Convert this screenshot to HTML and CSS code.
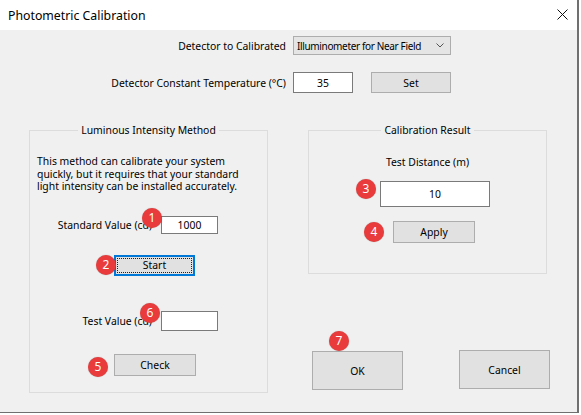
FILE: index.html
```html
<!DOCTYPE html>
<html lang="en">
<head>
  <meta charset="UTF-8" />
  <title>Photometric Calibration</title>
  <link rel="stylesheet" href="styles.css">
</head>
<body>
  <div class="window">
    <div class="titlebar">
      <span class="title">Photometric Calibration</span>
      <svg class="close" width="11" height="11" viewBox="0 0 11 11">
        <path d="M0.5 0.5L10.5 10.5M10.5 0.5L0.5 10.5" stroke="#111" stroke-width="1" fill="none"/>
      </svg>
    </div>

    <div class="content">
      <div class="settings">
        <label class="label">Detector to Calibrated</label>
        <div class="select">
          <span class="select-text">Illuminometer for Near Field</span>
          <svg width="8" height="5" viewBox="0 0 8 5">
            <path d="M0.5 0.5L4 4L7.5 0.5" stroke="#555" stroke-width="1" fill="none"/>
          </svg>
        </div>
        <label class="label">Detector Constant Temperature (°C)</label>
        <div class="inline">
          <input class="input temp" type="text" value="35">
          <button class="btn set">Set</button>
        </div>
      </div>

      <div class="panels">
        <fieldset class="group method">
          <legend>Luminous Intensity Method</legend>
          <p class="note">This method can calibrate your system<br>quickly, but it requires that your standard<br>light intensity can be installed accurately.</p>

          <div class="field first">
            <label>Standard Value (cd)</label>
            <span class="pin">
              <span class="badge b1">1</span>
              <input class="input value std" type="text" value="1000">
            </span>
          </div>
          <span class="pin start-pin">
            <span class="badge b2">2</span>
            <button class="btn start">Start</button>
          </span>

          <div class="field second">
            <label>Test Value (cd)</label>
            <span class="pin">
              <span class="badge b6">6</span>
              <input class="input value test" type="text" value="">
            </span>
          </div>
          <span class="pin check-pin">
            <span class="badge b5">5</span>
            <button class="btn check">Check</button>
          </span>
        </fieldset>

        <div class="side">
          <fieldset class="group result">
            <legend>Calibration Result</legend>
            <p class="caption">Test Distance (m)</p>
            <span class="pin distance-pin">
              <span class="badge b3">3</span>
              <input class="input distance" type="text" value="10">
            </span>
            <span class="pin apply-pin">
              <span class="badge b4">4</span>
              <button class="btn apply">Apply</button>
            </span>
          </fieldset>

          <div class="actions">
            <span class="pin ok-pin">
              <span class="badge b7">7</span>
              <button class="btn big">OK</button>
            </span>
            <button class="btn big">Cancel</button>
          </div>
        </div>
      </div>
    </div>
  </div>
</body>
</html>
```

FILE: styles.css
```css
body, html {
  margin: 0;
  padding: 0;
  background: #fff;
  font-family: 'Noto Sans', 'Liberation Sans', Arial, sans-serif;
  font-size: 10.4px;
  color: #000;
}
.window {
  width: 577px;
  height: 412px;
  background: #f0f0f0;
  border-right: 2px solid #707070;
  border-bottom: 1px solid #707070;
  display: flex;
  flex-direction: column;
}
.titlebar {
  height: 30px;
  flex: none;
  background: #fff;
  display: flex;
  align-items: center;
  justify-content: space-between;
  padding: 0 9px 0 8px;
}
.title {
  font-size: 12.3px;
}
.close {
  margin-top: -1px;
}
.settings {
  display: grid;
  grid-template-columns: 286px max-content;
  column-gap: 7px;
  row-gap: 17px;
  align-items: center;
  padding-top: 6px;
}
.label {
  text-align: right;
}
.select {
  width: 158px;
  height: 19px;
  box-sizing: border-box;
  border: 1px solid #adadad;
  background: #e5e5e5;
  display: flex;
  align-items: center;
  justify-content: space-between;
  padding: 0 6px 0 3px;
}
.select-text {
  white-space: nowrap;
  font-size: 10px;
  letter-spacing: -0.35px;
}
.inline {
  display: flex;
  gap: 18px;
}
.input {
  box-sizing: border-box;
  border: 1px solid #7a7a7a;
  background: #fff;
  font: inherit;
  text-align: center;
  padding: 0;
  margin: 0;
  display: block;
}
.temp {
  width: 60px;
  height: 21px;
}
.btn {
  box-sizing: border-box;
  border: 1px solid #adadad;
  background: #e1e1e1;
  font: inherit;
  color: #000;
  padding: 0;
  margin: 0;
  display: block;
}
.set {
  width: 80px;
  height: 21px;
}
.panels {
  display: flex;
  align-items: flex-start;
  gap: 40px;
  margin-top: 30px;
  padding-left: 29px;
}
.group {
  margin: 0;
  padding: 0;
  width: 239px;
  box-sizing: border-box;
  border: 1px solid #dcdcdc;
  min-width: 0;
}
.group legend {
  margin: 0 auto;
  padding: 0 3px;
  line-height: 14px;
}
.method {
  padding-bottom: 16px;
}
.note {
  margin: 18px 0 0 7px;
  line-height: 12.5px;
  white-space: nowrap;
}
.field {
  display: grid;
  grid-template-columns: 122px 57px;
  column-gap: 9px;
  align-items: center;
}
.field label {
  text-align: right;
}
.field.first {
  margin-top: 23px;
}
.field.second {
  margin-top: 35px;
}
.std {
  width: 57px;
  height: 18px;
}
.test {
  width: 57px;
  height: 20px;
}
.pin {
  position: relative;
  display: block;
}
.start-pin {
  margin: 21px 0 0 84px;
  width: 81px;
}
.start {
  width: 81px;
  height: 21px;
  border: 2px solid #0078d7;
  outline: 1px dotted #222;
  outline-offset: -4px;
}
.check-pin {
  margin: 23px 0 0 84px;
  width: 82px;
}
.check {
  width: 82px;
  height: 22px;
}
.result {
  padding-bottom: 30px;
}
.caption {
  margin: 18px 0 0;
  line-height: 14px;
  text-align: center;
}
.distance-pin {
  margin: 12px 0 0 71px;
  width: 110px;
}
.distance {
  width: 110px;
  height: 26px;
}
.apply-pin {
  margin: 14px 0 0 84px;
  width: 82px;
}
.apply {
  width: 82px;
  height: 22px;
}
.actions {
  display: flex;
  align-items: flex-start;
  gap: 56px;
  margin: 76px 0 0 4px;
}
.ok-pin {
  margin-top: 1px;
}
.big {
  width: 91px;
  height: 39px;
}

/* numbered markers over the controls */
.badge {
  position: absolute;
  width: 20px;
  height: 20px;
  border-radius: 50%;
  background: #e93b3b;
  color: #fff;
  font-size: 12px;
  line-height: 20px;
  text-align: center;
  box-shadow: 0 0 1px rgba(0, 0, 0, 0.35);
  z-index: 2;
}
.b1 { left: -19px; top: -8px; }
.b2 { left: -18px; top: 0; }
.b3 { left: -24px; top: -2px; }
.b4 { left: -29px; top: 1px; }
.b5 { left: -26px; top: 3px; }
.b6 { left: -21px; top: -8px; }
.b7 { left: 17px; top: -20px; }
```
